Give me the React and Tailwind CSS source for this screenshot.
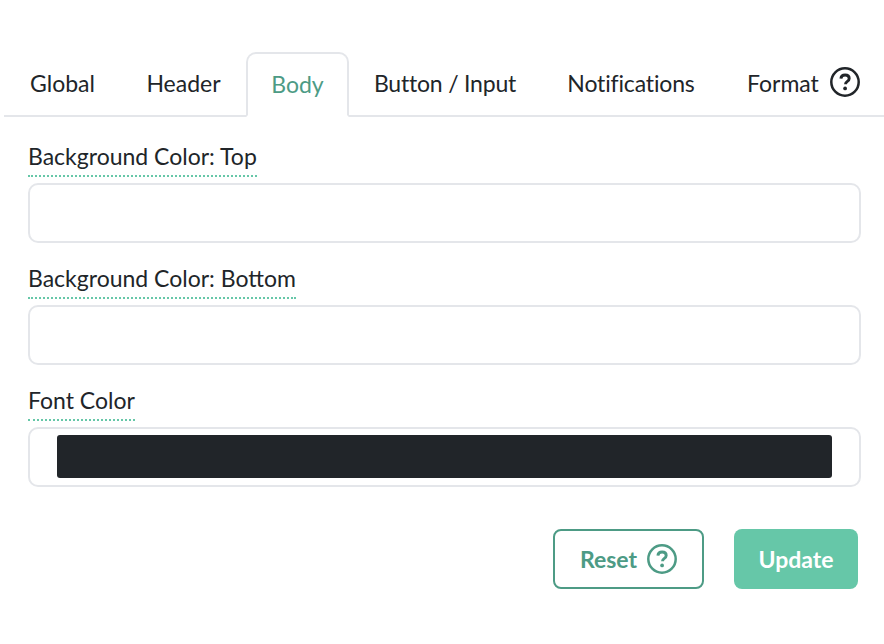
import React from 'react'

const fontStack = "font-['Lato','Noto_Sans',sans-serif]"

function QuestionIcon({ className }) {
  return (
    <svg viewBox="0 0 30 30" fill="none" className={className}>
      <circle cx="15" cy="15" r="13.7" stroke="currentColor" strokeWidth="2.5" />
      <path d="M10.9 11.6c.2-2.3 1.9-3.6 4.2-3.6 2.4 0 4.1 1.3 4.1 3.4 0 1.6-.9 2.4-2.1 3.2-1.2.8-1.6 1.4-1.6 2.7" stroke="currentColor" strokeWidth="2.9" />
      <circle cx="15.1" cy="21.4" r="1.9" fill="currentColor" />
    </svg>
  )
}

const tabs = [
  { label: 'Global', width: 'w-[117px]' },
  { label: 'Header', width: 'w-[125px]' },
  { label: 'Body', width: 'w-[103px]', active: true },
  { label: 'Button / Input', width: 'w-[192px] tracking-[-0.2px]' },
  { label: 'Notifications', width: 'w-[180px] tracking-[-0.15px]' },
]

function Field({ label, children }) {
  return (
    <div className="mb-[19px]">
      <div className="flex">
        <label className="h-[37px] border-b-2 border-dotted border-[#66c7a8] text-[23px] leading-[33px] text-[#212529]">
          {label}
        </label>
      </div>
      <div className="mt-[6px] h-[60px] rounded-[10px] border-2 border-[#e4e6ea] bg-white flex items-center px-[27px]">
        {children}
      </div>
    </div>
  )
}

export default function App() {
  return (
    <div className={`${fontStack} w-[884px] h-[644px] bg-white pt-[52px] overflow-hidden`}>
      <div className="ml-[4px] h-[65px] flex border-b-2 border-[#e4e6ea] text-[23px] text-[#212529]">
        {tabs.map((tab) => (
          <div
            key={tab.label}
            className={
              tab.active
                ? `${tab.width} h-[65px] shrink-0 flex items-center justify-center rounded-t-[10px] border-2 border-[#e4e6ea] border-b-white text-[#4d9b85]`
                : `${tab.width} h-[63px] shrink-0 flex items-center justify-center`
            }
          >
            {tab.label}
          </div>
        ))}
        <div className="h-[63px] pl-[26px] flex items-center">
          Format
          <QuestionIcon className="ml-[11px] mb-[4px] w-[30px] h-[30px] text-[#212529]" />
        </div>
      </div>

      <div className="px-[28px] pr-[23px] pt-[23px]">
        <Field label="Background Color: Top" />
        <Field label="Background Color: Bottom" />
        <Field label="Font Color">
          <div className="w-full h-[43px] mb-[1px] rounded-[3px] bg-[#212529]" />
        </Field>

        <div className="mt-[42px] pr-[3px] flex justify-end gap-[30px]">
          <button className="w-[151px] h-[60px] rounded-[8px] border-2 border-[#4d9b85] bg-white text-[#4d9b85] text-[23px] font-bold flex items-center justify-center">
            Reset
            <QuestionIcon className="ml-[10px] w-[30px] h-[30px]" />
          </button>
          <button className="w-[124px] h-[60px] rounded-[8px] bg-[#66c7a8] text-white text-[23px] font-bold">
            Update
          </button>
        </div>
      </div>
    </div>
  )
}
